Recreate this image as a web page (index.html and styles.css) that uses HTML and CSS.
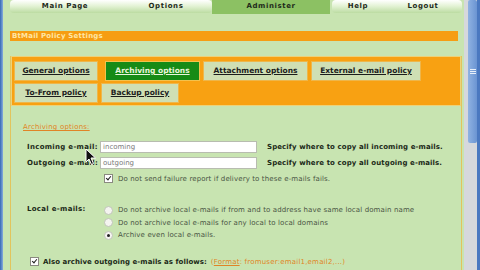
FILE: index.html
```html
<!DOCTYPE html>
<html lang="en">
<head>
    <meta charset="UTF-8">
    <title>BtMail Policy Settings</title>
    <link rel="stylesheet" href="styles.css">
</head>
<body>
    <div class="screen">
        <div class="edge"></div>
        <div class="page">
            <div class="topnav">
                <div class="navbtn nav-main">Main Page</div>
                <div class="navbtn nav-options">Options</div>
                <div class="navbtn nav-admin active">Administer</div>
                <div class="navbtn nav-help">Help</div>
                <div class="navbtn nav-logout">Logout</div>
            </div>

            <div class="title">BtMail Policy Settings</div>

            <div class="panel">
                <div class="tabbox">
                    <div class="tabrow">
                        <a class="tab t-general">General options</a>
                        <a class="tab t-archiving current">Archiving options</a>
                        <a class="tab t-attach">Attachment options</a>
                        <a class="tab t-external">External e-mail policy</a>
                    </div>
                    <div class="tabrow">
                        <a class="tab t-tofrom">To-From policy</a>
                        <a class="tab t-backup">Backup policy</a>
                    </div>
                </div>

                <div class="content">
                    <div class="heading">Archiving options:</div>

                    <div class="row field">
                        <label class="lbl">Incoming e-mail:</label>
                        <div class="input">incoming</div>
                        <span class="desc">Specify where to copy all incoming e-mails.</span>
                    </div>
                    <div class="row field">
                        <label class="lbl">Outgoing e-mail:</label>
                        <div class="input">outgoing</div>
                        <span class="desc">Specify where to copy all outgoing e-mails.</span>
                    </div>
                    <div class="row check-row">
                        <span class="box checked"></span>
                        <span class="note">Do not send failure report if delivery to these e-mails fails.</span>
                    </div>

                    <div class="local">
                        <label class="lbl">Local e-mails:</label>
                        <div class="radios">
                            <div class="radio-row"><span class="radio"></span><span class="note">Do not archive local e-mails if from and to address have same local domain name</span></div>
                            <div class="radio-row"><span class="radio"></span><span class="note">Do not archive local e-mails for any local to local domains</span></div>
                            <div class="radio-row"><span class="radio on"></span><span class="note">Archive even local e-mails.</span></div>
                        </div>
                    </div>

                    <div class="row also">
                        <span class="box checked"></span>
                        <span class="also-text">Also archive outgoing e-mails as follows:</span>
                        <span class="format">(<u>Format</u>: fromuser:email1,email2,...)</span>
                    </div>
                </div>
            </div>
        </div>
        <div class="scrollbar"><div class="thumb"><span></span><span></span><span></span></div></div>
    </div>

    <svg class="cursor" width="12" height="18" viewBox="0 0 12 18">
        <path d="M1 1 L1 14 L4 11 L6.5 16.5 L8.5 15.5 L6 10 L10.5 10 Z" fill="#111" stroke="#fff" stroke-width="1"/>
    </svg>
</body>
</html>
```

FILE: styles.css
```css
body {
    margin: 0;
    width: 480px;
    height: 270px;
    overflow: hidden;
    background: #c8e4b1;
    font-family: "DejaVu Sans", Verdana, sans-serif;
    color: #1c2a18;
    position: relative;
}

.screen {
    display: flex;
    height: 270px;
}

.edge {
    width: 3px;
    background: linear-gradient(to right, #3568b4, #86acdc);
}

.page {
    flex: 1;
    padding: 0 0 0 7px;
}

/* top navigation */
.topnav {
    display: flex;
    height: 14px;
}

.navbtn {
    font-size: 7px;
    font-weight: bold;
    letter-spacing: 0.6px;
    line-height: 13px;
    text-align: center;
    color: #1e2a1a;
    background: linear-gradient(to bottom, #ffffff, #e4f3d6 45%, #bcdca2);
    height: 13px;
}

.nav-main { width: 110px; border-radius: 4px 0 0 4px; }
.nav-options { width: 92px; border-radius: 0 4px 4px 0; }
.nav-admin {
    width: 118px;
    height: 14px;
    background: #8cc163;
}
.nav-help { width: 52px; border-radius: 4px 0 0 4px; margin-left: 2px; }
.nav-logout { width: 78px; border-radius: 0 4px 4px 0; }

.title {
    margin: 17px 6px 0 0;
    height: 10px;
    line-height: 10px;
    background: #f69d12;
    color: #ffe6a4;
    font-size: 7px;
    font-weight: bold;
    padding-left: 2px;
    letter-spacing: 0.2px;
}

/* tab panel */
.panel {
    margin-top: 15px;
    margin-right: 2px;
    border-left: 1px solid #e2c45c;
    border-right: 1px solid #e2c45c;
    height: 214px;
}

.tabbox {
    margin-top: 2px;
    background: #f8a112;
    border: 1px solid #ecd27a;
    padding: 4px 0 2px 2px;
    display: flex;
    flex-direction: column;
    gap: 2px;
}

.tabrow {
    display: flex;
    gap: 3px;
}

.tab {
    height: 18px;
    line-height: 18px;
    text-align: center;
    background: #cfdfb4;
    border: 1px solid #eeb64a;
    font-size: 7.5px;
    font-weight: bold;
    color: #1c1c1c;
    text-decoration: underline;
}

.t-general { width: 82px; }
.t-archiving { width: 93px; margin-left: 4px; }
.t-attach { width: 103px; }
.t-external { width: 108px; }
.t-tofrom { width: 82px; }
.t-backup { width: 76px; }

.tab.current {
    background: #168b16;
    color: #eaf6dc;
    border-color: #f3c24c;
}

/* form content */
.content {
    padding: 16px 0 0 16px;
    font-size: 7px;
}

.heading {
    margin-left: -4px;
    color: #e08426;
    text-decoration: underline;
    line-height: 10px;
    margin-bottom: 9px;
    letter-spacing: 0.2px;
}

.row {
    display: flex;
    align-items: center;
}

.field {
    height: 12px;
    margin-bottom: 4px;
}

.lbl {
    width: 73px;
    font-weight: bold;
    letter-spacing: 0.3px;
    flex-shrink: 0;
}

.input {
    width: 153px;
    height: 10px;
    line-height: 10px;
    background: #fff;
    border: 1px solid #b8bcb0;
    color: #7a7a7a;
    padding-left: 2px;
    font-size: 7px;
}

.desc {
    margin-left: 10px;
    font-weight: bold;
    letter-spacing: 0.1px;
}

.check-row {
    margin-top: 3px;
    padding-left: 77px;
    height: 11px;
}

.box {
    width: 7px;
    height: 7px;
    border: 1px solid #8a8a80;
    background: #fff;
    position: relative;
    flex-shrink: 0;
}

.box.checked::after {
    content: "";
    position: absolute;
    left: 2px;
    top: 0;
    width: 2px;
    height: 4px;
    border: solid #222;
    border-width: 0 1.3px 1.3px 0;
    transform: rotate(40deg);
}

.note {
    margin-left: 5px;
    color: #4a5444;
    font-size: 7px;
    letter-spacing: 0.12px;
}

.local {
    display: flex;
    margin-top: 20px;
}

.local .lbl {
    line-height: 10px;
}

.radios {
    padding-left: 4px;
}

.radio-row {
    display: flex;
    align-items: center;
    height: 12.5px;
}

.radio {
    width: 7px;
    height: 7px;
    border-radius: 50%;
    background: #f4f4f0;
    border: 1px solid #c0c4b8;
    position: relative;
}

.radio.on::after {
    content: "";
    position: absolute;
    left: 2px;
    top: 2px;
    width: 3px;
    height: 3px;
    border-radius: 50%;
    background: #222;
}

.radio-row .note {
    margin-left: 5px;
}

.also {
    margin-top: 15px;
    padding-left: 3px;
    height: 10px;
}

.also-text {
    margin-left: 4px;
    font-weight: bold;
    letter-spacing: 0.05px;
}

.format {
    margin-left: 4px;
    color: #e08426;
    letter-spacing: 0.2px;
}

/* scrollbar */
.scrollbar {
    width: 16px;
    background: #d6d8dc;
    border-right: 3px solid #4a78c0;
    box-sizing: border-box;
    padding-left: 4px;
}

.thumb {
    height: 143px;
    background: linear-gradient(to right, #8fb2e2, #6a94d2);
    border-radius: 2px;
    display: flex;
    flex-direction: column;
    justify-content: center;
    align-items: center;
    gap: 1px;
}

.thumb span {
    width: 6px;
    height: 1px;
    background: #e8f0fa;
}

.cursor {
    position: absolute;
    left: 85px;
    top: 148px;
}
```
